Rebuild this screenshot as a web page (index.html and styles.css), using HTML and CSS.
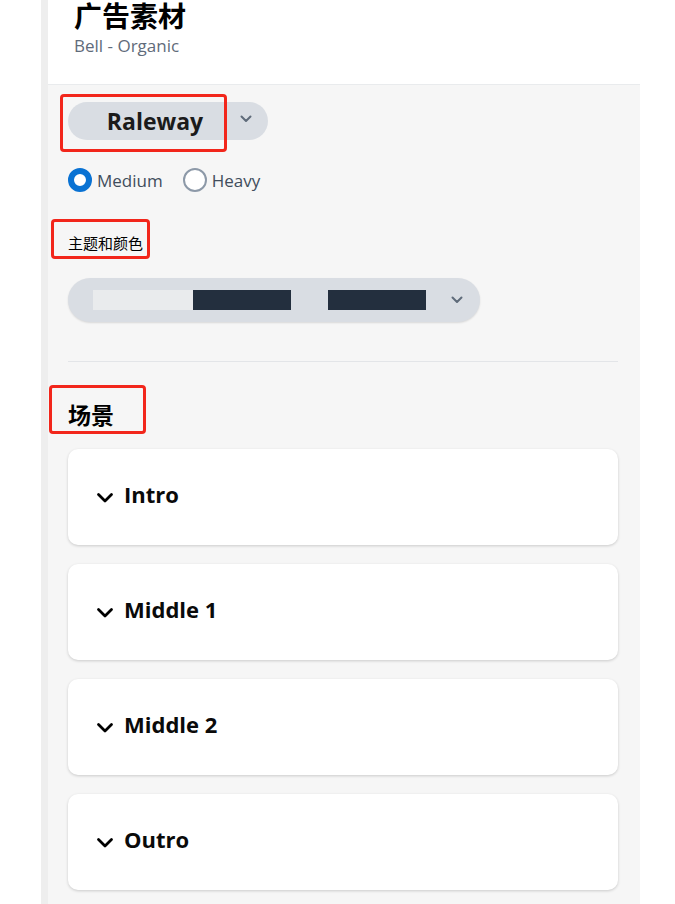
FILE: index.html
```html
<!DOCTYPE html>
<html lang="zh">
<head>
  <meta charset="UTF-8" />
  <meta name="viewport" content="width=device-width, initial-scale=1.0" />
  <title>广告素材</title>
  <link rel="stylesheet" href="styles.css">
</head>
<body>
  <div class="page">
    <div class="gutter"></div>
    <div class="main">
      <header class="header">
        <h1 class="title">广告素材</h1>
        <div class="subtitle">Bell - Organic</div>
      </header>

      <section class="panel">
        <div class="font-pick">
          <span class="font-name">Raleway<span class="mark mark-font"></span></span>
          <span class="font-arrow">
            <svg width="12" height="8" viewBox="0 0 12 8"><path d="M1.5 1.5 L6 6 L10.5 1.5" fill="none" stroke="#5f6b7a" stroke-width="2" stroke-linecap="round" stroke-linejoin="round"/></svg>
          </span>
        </div>

        <div class="weights">
          <label class="radio"><span class="dot on"></span>Medium</label>
          <label class="radio"><span class="dot"></span>Heavy</label>
        </div>

        <div class="label">主题和颜色<span class="mark mark-theme"></span></div>

        <div class="theme-pick">
          <span class="swatch light"></span>
          <span class="swatch dark"></span>
          <span class="swatch dark second"></span>
          <svg class="theme-arrow" width="12" height="8" viewBox="0 0 12 8"><path d="M1.5 1.5 L6 6 L10.5 1.5" fill="none" stroke="#5f6b7a" stroke-width="2" stroke-linecap="round" stroke-linejoin="round"/></svg>
        </div>

        <hr class="divider">

        <h2 class="scenes">场景<span class="mark mark-scenes"></span></h2>

        <div class="cards">
          <div class="card">
            <svg width="18" height="11" viewBox="0 0 18 11"><path d="M2.5 2.5 L9 9 L15.5 2.5" fill="none" stroke="#000" stroke-width="2.8" stroke-linecap="round" stroke-linejoin="round"/></svg>
            <span>Intro</span>
          </div>
          <div class="card">
            <svg width="18" height="11" viewBox="0 0 18 11"><path d="M2.5 2.5 L9 9 L15.5 2.5" fill="none" stroke="#000" stroke-width="2.8" stroke-linecap="round" stroke-linejoin="round"/></svg>
            <span>Middle 1</span>
          </div>
          <div class="card">
            <svg width="18" height="11" viewBox="0 0 18 11"><path d="M2.5 2.5 L9 9 L15.5 2.5" fill="none" stroke="#000" stroke-width="2.8" stroke-linecap="round" stroke-linejoin="round"/></svg>
            <span>Middle 2</span>
          </div>
          <div class="card">
            <svg width="18" height="11" viewBox="0 0 18 11"><path d="M2.5 2.5 L9 9 L15.5 2.5" fill="none" stroke="#000" stroke-width="2.8" stroke-linecap="round" stroke-linejoin="round"/></svg>
            <span>Outro</span>
          </div>
        </div>
      </section>
    </div>
  </div>
</body>
</html>
```

FILE: styles.css
```css
body {
  margin: 0;
  background: #fff;
  font-family: "Open Sans", "Noto Sans CJK SC", sans-serif;
  color: #000;
}
.page {
  display: flex;
  min-height: 904px;
  padding-left: 41px;
}
.gutter {
  width: 7px;
  background: #eeeeee;
}
.main {
  width: 592px;
  display: flex;
  flex-direction: column;
}
.header {
  height: 84px;
  border-bottom: 1px solid #e9ebed;
  padding-left: 26px;
  background: #fff;
}
.title {
  margin: 0;
  font-size: 28px;
  line-height: 32px;
  font-weight: bold;
  color: #000;
}
.subtitle {
  margin-top: 3px;
  font-size: 17px;
  line-height: 22px;
  color: #5f6b7a;
}
.panel {
  flex: 1;
  background: #f6f6f6;
  padding: 17px 22px 0 20px;
}
.mark {
  position: absolute;
  border: 3px solid #f2261b;
  border-radius: 4px;
  box-sizing: border-box;
}
.font-pick {
  display: flex;
  width: 200px;
  height: 38px;
  background: #d9dde3;
  border-radius: 19px;
}
.font-name {
  position: relative;
  width: 158px;
  box-sizing: border-box;
  padding-left: 16px;
  text-align: center;
  font-size: 23px;
  font-weight: bold;
  line-height: 38px;
  color: #1b1b1b;
}
.mark-font {
  left: -8px;
  top: -8px;
  width: 167px;
  height: 58px;
}
.font-arrow {
  flex: 1;
  display: flex;
  align-items: center;
  justify-content: center;
  padding-right: 2px;
  padding-bottom: 4px;
}
.weights {
  display: flex;
  gap: 20px;
  margin-top: 28px;
  height: 24px;
}
.radio {
  display: flex;
  align-items: center;
  gap: 5px;
  font-size: 17px;
  color: #414d5c;
}
.dot {
  width: 20px;
  height: 20px;
  border: 2px solid #8d99a8;
  border-radius: 50%;
  background: #fff;
}
.dot.on {
  width: 12px;
  height: 12px;
  border: 6px solid #0972d3;
}
.label {
  position: relative;
  margin-top: 41px;
  font-size: 15px;
  line-height: 20px;
  color: #000;
}
.mark-theme {
  left: -17px;
  top: -14px;
  width: 99px;
  height: 40px;
}
.theme-pick {
  display: flex;
  align-items: center;
  width: 412px;
  height: 44px;
  margin-top: 25px;
  background: #d9dde3;
  border-radius: 22px;
  padding-left: 25px;
  box-sizing: border-box;
  box-shadow: 0 1px 2px rgba(0, 0, 0, 0.12);
}
.swatch {
  height: 20px;
  width: 98px;
}
.swatch.light {
  width: 100px;
  background: #e9ebed;
}
.swatch.dark {
  background: #232f3e;
}
.swatch.second {
  margin-left: 37px;
}
.theme-arrow {
  margin-left: 25px;
}
.divider {
  margin: 39px 0 0;
  border: none;
  border-top: 1px solid #e3e5e8;
}
.scenes {
  position: relative;
  margin: 40px 0 0;
  font-size: 23px;
  line-height: 26px;
  font-weight: bold;
}
.mark-scenes {
  left: -19px;
  top: -17px;
  width: 97px;
  height: 49px;
}
.cards {
  display: flex;
  flex-direction: column;
  gap: 19px;
  margin-top: 21px;
}
.card {
  display: flex;
  align-items: center;
  gap: 10px;
  height: 96px;
  padding-left: 28px;
  background: #fff;
  border-radius: 10px;
  box-shadow: 0 1px 3px rgba(0, 0, 0, 0.18);
  font-size: 22px;
  font-weight: bold;
  color: #0a0a0a;
}
.card span {
  line-height: 26px;
  margin-bottom: 7px;
}
```
